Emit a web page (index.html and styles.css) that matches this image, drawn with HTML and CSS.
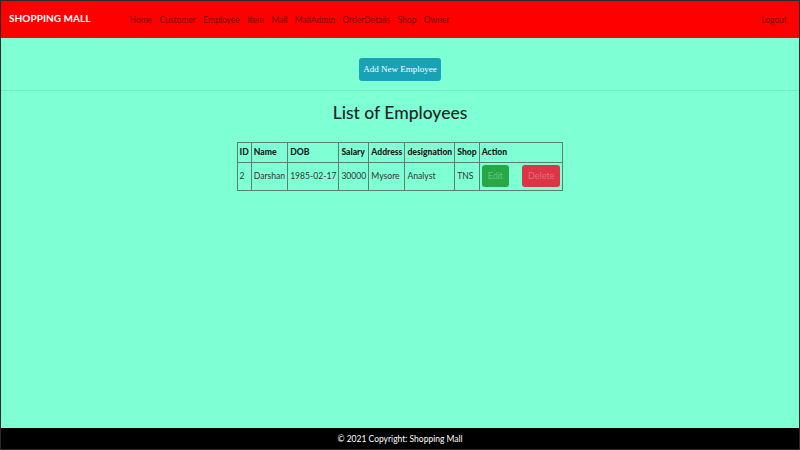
FILE: index.html
```html
<!DOCTYPE html>
<html>
<head>
<meta charset="utf-8">
<link rel="stylesheet" href="styles.css">
</head>
<body>
<div class="page">
  <nav class="navbar">
    <span class="brand">SHOPPING MALL</span>
    <ul class="links">
      <li>Home</li>
      <li>Customer</li>
      <li>Employee</li>
      <li>Item</li>
      <li>Mall</li>
      <li>MallAdmin</li>
      <li>OrderDetails</li>
      <li>Shop</li>
      <li>Owner</li>
    </ul>
    <span class="logout">Logout</span>
  </nav>
  <main class="content">
    <div class="add-row"><button class="btn-add">Add New Employee</button></div>
    <hr class="divider">
    <h2 class="title">List of Employees</h2>
    <table class="emp">
      <thead>
        <tr><th>ID</th><th>Name</th><th>DOB</th><th>Salary</th><th>Address</th><th>designation</th><th>Shop</th><th>Action</th></tr>
      </thead>
      <tbody>
        <tr><td>2</td><td>Darshan</td><td>1985-02-17</td><td>30000</td><td>Mysore</td><td>Analyst</td><td>TNS</td>
          <td class="actions"><span class="btn btn-edit">Edit</span><span class="btn btn-del">Delete</span></td></tr>
      </tbody>
    </table>
  </main>
  <footer class="footer">© 2021 Copyright: Shopping Mall</footer>
</div>
</body>
</html>
```
FILE: styles.css
```css
html, body { margin: 0; padding: 0; }
body { font-family: "Lato", "Noto Sans", sans-serif; }
.page {
  box-sizing: border-box;
  height: 450px;
  width: 800px;
  border: 1px solid #2a2a2a;
  background: #7fffd4;
  display: flex;
  flex-direction: column;
}
.navbar {
  height: 37px;
  background: #ff0000;
  display: flex;
  align-items: center;
  padding: 0 12px 0 8px;
  flex-shrink: 0;
}
.brand { color: #fff; font-size: 10px; font-weight: 700; margin-top: -4px; letter-spacing: 0.05px; }
.links { list-style: none; display: flex; gap: 7.4px; margin: 0 0 0 39px; padding: 0; font-size: 8.5px; color: #800000; }
.logout { margin-left: auto; font-size: 8.5px; color: #800000; }
.content { flex: 1; display: flex; flex-direction: column; align-items: center; }
.add-row { margin-top: 18px; }
.btn-add {
  font-family: "Liberation Serif", serif;
  font-size: 9px;
  color: #fff;
  background: #17a2b8;
  border: none;
  border-radius: 3px;
  height: 23px;
  width: 82px;
  padding: 0;
}
.divider { width: 100%; margin: 9px 0 0; border: 0; border-top: 1px solid rgba(0,0,0,0.08); }
.title { font-size: 17.5px; font-weight: 500; margin: 11px 0 0; color: #212529; }
.emp { border-collapse: collapse; margin-top: 19px; font-size: 8.6px; color: #212529; border: 1px solid #5b7d72; }
.emp th, .emp td { border: 1px solid #5b7d72; padding: 2px 2px; text-align: left; }
.emp th { font-weight: 900; height: 15px; color: #1a1a1a; }
.emp td { height: 23px; color: #333; }
.actions { white-space: nowrap; }
.btn { display: inline-block; height: 22px; line-height: 22px; border-radius: 3px; padding: 0 6px; color: rgba(255,255,255,0.3); font-size: 9px; vertical-align: middle; }
.btn-edit { background: #28a745; }
.btn-del { background: #dc3545; margin-left: 13px; }
.footer { height: 21px; background: #000; color: #fff; font-size: 8.5px; display: flex; align-items: center; justify-content: center; flex-shrink: 0; }
```
